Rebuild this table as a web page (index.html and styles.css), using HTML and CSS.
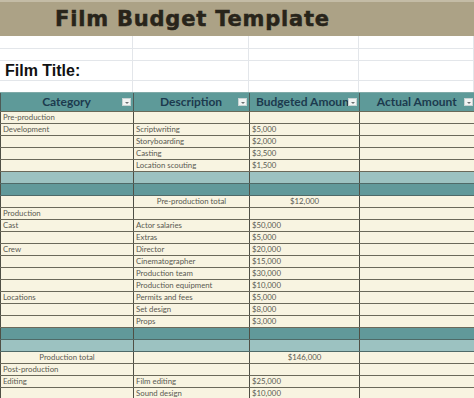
FILE: index.html
```html
<!DOCTYPE html>
<html>
<head>
<meta charset="utf-8">
<link rel="stylesheet" href="styles.css">
</head>
<body>
<div class="title-bar"><h1 class="title">Film Budget Template</h1></div>
<div class="blank-grid">
  <div class="g r1"></div><div class="g r1"></div><div class="g r1"></div><div class="g r1"></div>
  <div class="g r2"></div><div class="g r2"></div><div class="g r2"></div><div class="g r2"></div>
  <div class="g r3 film-title">Film Title:</div><div class="g r3"></div><div class="g r3"></div><div class="g r3"></div>
  <div class="g r4"></div><div class="g r4"></div><div class="g r4"></div><div class="g r4"></div>
</div>
<table class="budget">
  <colgroup><col class="c1"><col class="c2"><col class="c3"><col class="c4"></colgroup>
  <thead>
    <tr>
      <th><span class="hd">Category</span><span class="dd"></span></th>
      <th><span class="hd">Description</span><span class="dd"></span></th>
      <th class="left"><span class="hd">Budgeted Amount</span><span class="dd"></span></th>
      <th><span class="hd">Actual Amount</span><span class="dd"></span></th>
    </tr>
  </thead>
  <tbody>
    <tr><td>Pre-production</td><td></td><td></td><td></td></tr>
    <tr><td>Development</td><td>Scriptwriting</td><td>$5,000</td><td></td></tr>
    <tr><td></td><td>Storyboarding</td><td>$2,000</td><td></td></tr>
    <tr><td></td><td>Casting</td><td>$3,500</td><td></td></tr>
    <tr><td></td><td>Location scouting</td><td>$1,500</td><td></td></tr>
    <tr class="band-light"><td></td><td></td><td></td><td></td></tr>
    <tr class="band-dark"><td></td><td></td><td></td><td></td></tr>
    <tr><td></td><td class="center">Pre-production total</td><td class="center">$12,000</td><td></td></tr>
    <tr><td>Production</td><td></td><td></td><td></td></tr>
    <tr><td>Cast</td><td>Actor salaries</td><td>$50,000</td><td></td></tr>
    <tr><td></td><td>Extras</td><td>$5,000</td><td></td></tr>
    <tr><td>Crew</td><td>Director</td><td>$20,000</td><td></td></tr>
    <tr><td></td><td>Cinematographer</td><td>$15,000</td><td></td></tr>
    <tr><td></td><td>Production team</td><td>$30,000</td><td></td></tr>
    <tr><td></td><td>Production equipment</td><td>$10,000</td><td></td></tr>
    <tr><td>Locations</td><td>Permits and fees</td><td>$5,000</td><td></td></tr>
    <tr><td></td><td>Set design</td><td>$8,000</td><td></td></tr>
    <tr><td></td><td>Props</td><td>$3,000</td><td></td></tr>
    <tr class="band-dark"><td></td><td></td><td></td><td></td></tr>
    <tr class="band-light"><td></td><td></td><td></td><td></td></tr>
    <tr><td class="center">Production total</td><td></td><td class="center">$146,000</td><td></td></tr>
    <tr><td>Post-production</td><td></td><td></td><td></td></tr>
    <tr><td>Editing</td><td>Film editing</td><td>$25,000</td><td></td></tr>
    <tr><td></td><td>Sound design</td><td>$10,000</td><td></td></tr>
  </tbody>
</table>
</body>
</html>
```

FILE: styles.css
```css
html, body {
  margin: 0;
  padding: 0;
  background: #ffffff;
  overflow: hidden;
}
body {
  width: 474px;
  height: 398px;
  font-family: "Lato", "Liberation Sans", sans-serif;
}
.title-bar {
  height: 34px;
  background: #aca286;
  border-top: 2px solid #c4bca6;
  display: flex;
  align-items: center;
  padding-left: 55px;
}
.title {
  margin: 0;
  font-family: "DejaVu Sans", sans-serif;
  font-weight: 900;
  font-size: 21px;
  color: #28241a;
  -webkit-text-stroke: 0.5px #28241a;
  letter-spacing: 0.8px;
  line-height: 1;
  padding-top: 1px;
}
.blank-grid {
  display: grid;
  grid-template-columns: 133px 116px 110px 115px;
  grid-template-rows: 13px 12px 20px 11px;
}
.g {
  border-right: 1px solid #e3e6ea;
  border-bottom: 1px solid #e3e6ea;
  box-sizing: border-box;
}
.g.r4 { border-bottom: none; }
.film-title {
  font-family: "Liberation Sans", Arial, sans-serif;
  font-weight: bold;
  font-size: 16px;
  color: #111111;
  padding-left: 5px;
  display: flex;
  align-items: center;
  padding-top: 1px;
}
.budget {
  border-collapse: collapse;
  table-layout: fixed;
  width: 474px;
  background: #f8f4e1;
}
.c1 { width: 133px; }
.c2 { width: 116px; }
.c3 { width: 110px; }
.c4 { width: 115px; }
.budget th {
  height: 18px;
  padding: 0 3px 0 2px;
  background: #5e9a99;
  color: #1c3a4e;
  font-weight: bold;
  font-size: 12px;
  text-align: center;
  white-space: nowrap;
  overflow: hidden;
  position: relative;
  border-left: 1px solid #4d5a56;
  border-top: 1px solid #7faaa8;
  border-bottom: 1px solid #6a6a58;
  box-sizing: border-box;
}
.budget th.left { text-align: left; padding-left: 6px; }
.hd { display: inline-block; line-height: 18px; }
.dd {
  position: absolute;
  right: 2px;
  top: 5px;
  width: 9px;
  height: 8px;
  background: #f1f3f3;
  border: 1px solid #c9d3d3;
  box-sizing: border-box;
}
.dd::after {
  content: "";
  position: absolute;
  left: 2px;
  top: 3px;
  border-left: 2px solid transparent;
  border-right: 2px solid transparent;
  border-top: 2px solid #6b7072;
}
.budget td {
  height: 12px;
  padding: 0 2px;
  font-size: 7.8px;
  color: #5a5a52;
  white-space: nowrap;
  overflow: hidden;
  border-left: 1px solid #4f4f45;
  border-bottom: 1px solid #6b695a;
  box-sizing: border-box;
  line-height: 11px;
  vertical-align: middle;
}
.budget td.center { text-align: center; }
.band-light td { background: #9cc2c1; border-bottom-color: #4f6a68; }
.band-dark td { background: #61999a; border-bottom-color: #4f6a68; }
```
